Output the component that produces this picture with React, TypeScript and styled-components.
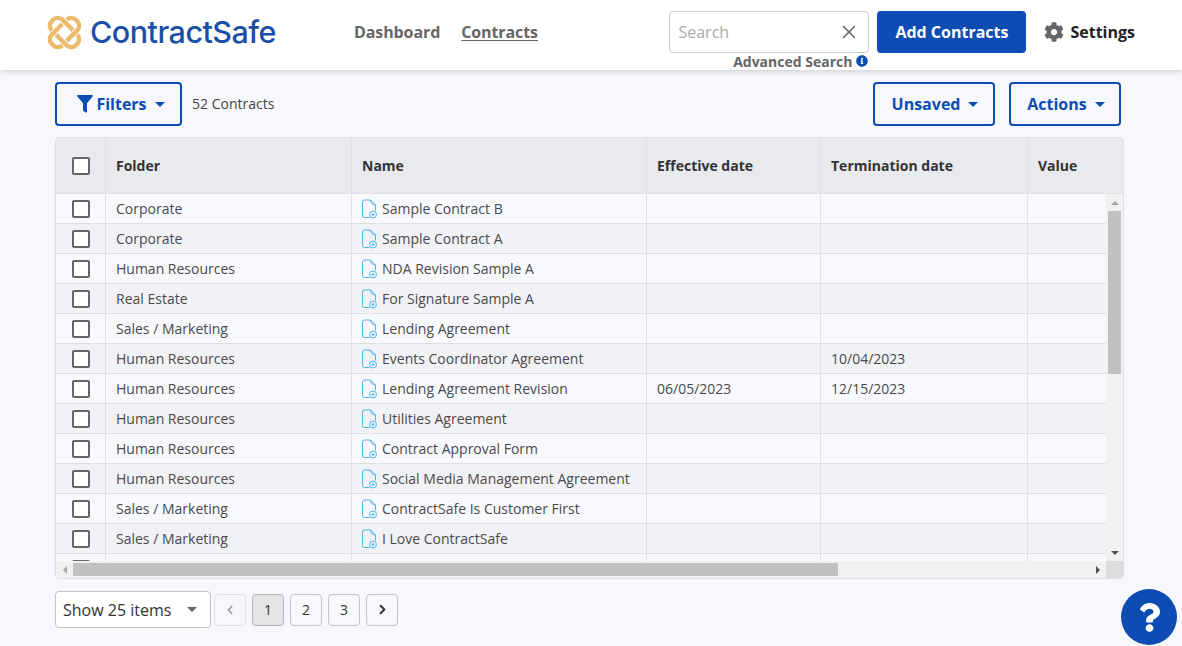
import React from "react";
import styled, { createGlobalStyle } from "styled-components";
import { FaCog, FaInfoCircle, FaQuestion } from "react-icons/fa";
import { X, ChevronLeft, ChevronRight } from "lucide-react";

const Global = createGlobalStyle`
  html, body { margin: 0; padding: 0; height: 100%; background: #f7f8fc; overflow: hidden; }
  body { font-family: "Open Sans", "Liberation Sans", sans-serif; color: #444; }
  * { box-sizing: border-box; }
`;

const Page = styled.div`
  position: relative;
  width: 1182px;
  height: 646px;
  overflow: hidden;
`;

const Header = styled.header`
  height: 70px;
  background: #fff;
  box-shadow: 0 1px 6px rgba(0, 0, 0, 0.2);
  display: flex;
  align-items: flex-start;
  padding: 11px 47px 0 47px;
  position: relative;
  z-index: 2;
`;

const Brand = styled.div`
  display: flex;
  align-items: center;
  height: 42px;
  gap: 8px;
  width: 307px;
`;

const BrandName = styled.span`
  font-family: "Inter", "Open Sans", sans-serif;
  font-weight: 500;
  font-size: 30.5px;
  letter-spacing: -0.52px;
  color: #1a4fa8;
  padding-bottom: 2px;
`;

const Nav = styled.nav`
  display: flex;
  align-items: center;
  height: 42px;
  gap: 21px;
`;

const NavLink = styled.a<{ $active?: boolean }>`
  font-size: 16px;
  font-weight: 700;
  color: #666;
  letter-spacing: -0.1px;
  text-decoration: ${(p) => (p.$active ? "underline" : "none")};
  text-underline-offset: 2px;
`;

const Right = styled.div`
  margin-left: auto;
  display: flex;
  align-items: flex-start;
  gap: 8px;
`;

const SearchColumn = styled.div`
  display: flex;
  flex-direction: column;
  align-items: flex-end;
  width: 200px;
`;

const SearchBox = styled.div`
  width: 200px;
  height: 42px;
  border: 1px solid #ccc;
  border-radius: 4px;
  background: #fff;
  display: flex;
  align-items: center;
  justify-content: space-between;
  padding: 0 8px 0 8px;
  color: #666;
`;

const Placeholder = styled.span`
  font-size: 16px;
  color: #aaa;
`;

const AdvancedSearch = styled.div`
  display: flex;
  align-items: center;
  gap: 4px;
  height: 16px;
  font-size: 14px;
  font-weight: 700;
  color: #666;
  margin-right: 1px;
  white-space: nowrap;
  svg { color: #0d4db3; }
`;

const PrimaryButton = styled.button`
  width: 149px;
  height: 42px;
  border: 0;
  border-radius: 4px;
  background: #0d4db3;
  color: #fff;
  font: 700 16px "Open Sans", sans-serif;
`;

const SettingsLink = styled.div`
  display: flex;
  align-items: center;
  height: 42px;
  gap: 6px;
  margin-left: 10px;
  font-size: 16px;
  font-weight: 700;
  color: #222;
  svg { color: #666; }
`;

const Main = styled.main`
  padding: 12px 58px 0 55px;
`;

const Toolbar = styled.div`
  display: flex;
  align-items: center;
  height: 44px;
  padding-right: 3px;
  gap: 14px;
`;

const OutlineButton = styled.button<{ $width: number; $inset: number }>`
  width: ${(p) => p.$width}px;
  height: 44px;
  border: 2px solid #0d4db3;
  border-radius: 4px;
  background: transparent;
  color: #0d4db3;
  font: 700 16px "Open Sans", sans-serif;
  display: flex;
  align-items: center;
  justify-content: center;
  gap: 4px;
  padding: 0 0 0 ${(p) => p.$inset}px;
`;

const Caret = styled.span`
  width: 0;
  height: 0;
  margin-left: 4px;
  border-left: 5px solid transparent;
  border-right: 5px solid transparent;
  border-top: 5px solid currentColor;
`;

const Count = styled.span`
  font-size: 14px;
  color: #444;
  margin-left: -4px;
  padding-bottom: 2px;
  flex: 1;
`;

const TableFrame = styled.div`
  position: relative;
  margin-top: 11px;
  width: 1069px;
  height: 442px;
  border: 1px solid #dfe0e3;
  border-radius: 4px;
  overflow: hidden;
`;

const Columns = "50px 246px 295px 174px 207px 300px";

const HeadRow = styled.div`
  display: grid;
  grid-template-columns: ${Columns};
  height: 56px;
  background: #e9eaee;
  border-bottom: 1px solid #dfe0e3;
`;

const HeadCell = styled.div`
  display: flex;
  align-items: center;
  padding-left: 10px;
  font-size: 14px;
  font-weight: 700;
  color: #333;
  border-right: 1px solid #dfe0e3;
  &:last-child { border-right: 0; }
`;

const CheckCell = styled.div`
  display: flex;
  align-items: center;
  justify-content: center;
  border-right: 1px solid #dfe0e3;
`;

const Check = styled.span`
  width: 18px;
  height: 18px;
  border: 2px solid #666;
  border-radius: 2px;
  background: #fff;
  margin-left: 1px;
`;

const Row = styled.div<{ $even: boolean }>`
  display: grid;
  grid-template-columns: ${Columns};
  height: 30px;
  background: ${(p) => (p.$even ? "#f1f2f6" : "#f8f9fd")};
  border-bottom: 1px solid #dfe0e3;
`;

const Cell = styled.div`
  display: flex;
  align-items: center;
  padding-left: 10px;
  font-size: 14px;
  color: #4a4a4a;
  white-space: nowrap;
  border-right: 1px solid #dfe0e3;
  &:last-child { border-right: 0; }
`;

const NameCell = styled(Cell)`
  gap: 5px;
`;

const VScroll = styled.div`
  position: absolute;
  top: 56px;
  right: 0;
  bottom: 17px;
  width: 17px;
  background: #f1f1f1;
  display: flex;
  flex-direction: column;
  align-items: center;
`;

const HScroll = styled.div`
  position: absolute;
  left: 0;
  right: 17px;
  bottom: 0;
  height: 17px;
  background: #f1f1f1;
  display: flex;
  align-items: center;
`;

const Corner = styled.div`
  position: absolute;
  right: 0;
  bottom: 0;
  width: 17px;
  height: 17px;
  background: #dcdcdc;
`;

const ArrowSlot = styled.div`
  flex: none;
  width: 17px;
  height: 17px;
  display: flex;
  align-items: center;
  justify-content: center;
`;

const Spacer = styled.div`
  flex: 1;
`;

const VThumb = styled.div`
  width: 13px;
  height: 163px;
  background: #c1c1c1;
  flex: none;
`;

const HThumb = styled.div`
  width: 765px;
  height: 13px;
  background: #c1c1c1;
  flex: none;
`;

const Arrow = styled.span<{ $dir: "up" | "down" | "left" | "right"; $muted?: boolean }>`
  width: 0;
  height: 0;
  border-style: solid;
  border-color: transparent;
  ${(p) => {
    const c = p.$muted ? "#a3a3a3" : "#505050";
    switch (p.$dir) {
      case "up":
        return `border-width: 0 4px 4px 4px; border-bottom-color: ${c};`;
      case "down":
        return `border-width: 4px 4px 0 4px; border-top-color: ${c};`;
      case "left":
        return `border-width: 4px 4px 4px 0; border-right-color: ${c};`;
      default:
        return `border-width: 4px 0 4px 4px; border-left-color: ${c};`;
    }
  }}
`;

const Footer = styled.div`
  display: flex;
  align-items: center;
  margin-top: 12px;
  height: 37px;
  gap: 6px;
`;

const ItemsSelect = styled.div`
  width: 156px;
  height: 37px;
  border: 1px solid #c4c4c4;
  border-radius: 4px;
  background: #fff;
  display: flex;
  align-items: center;
  justify-content: space-between;
  padding: 0 13px 0 7px;
  font-size: 16px;
  color: #333;
  margin-right: -3px;
  span:last-child { color: #666; }
`;

const PageButton = styled.div<{ $active?: boolean; $disabled?: boolean }>`
  width: 32px;
  height: 32px;
  border: 1px solid ${(p) => (p.$disabled ? "#e2e2e6" : p.$active ? "#b5b5b5" : "#c4c4c4")};
  border-radius: 4px;
  background: ${(p) => (p.$active ? "#e4e5e7" : "transparent")};
  color: ${(p) => (p.$disabled ? "#999" : "#333")};
  display: flex;
  align-items: center;
  justify-content: center;
  font-size: 14px;
`;

const HelpButton = styled.div`
  position: absolute;
  left: 1121px;
  top: 589px;
  width: 56px;
  height: 56px;
  border-radius: 50%;
  background: #0d4db3;
  color: #fff;
  display: flex;
  align-items: center;
  justify-content: center;
`;

const FilterGlyph = styled.svg`
  margin-right: -1px;
`;

const ringA = { x: 0.5, y: 10, width: 34, height: 15, rx: 6.5, transform: "rotate(45 17.5 17.5)" };
const ringB = { x: 0.5, y: 10, width: 34, height: 15, rx: 6.5, transform: "rotate(-45 17.5 17.5)" };

const Logo = () => (
  <svg width="35" height="35" viewBox="0 0 35 35" fill="none" stroke="#ecba6c" strokeWidth="4.4">
    <defs>
      <clipPath id="logo-sides">
        <rect x="0" y="0" width="12" height="35" />
        <rect x="23" y="0" width="12" height="35" />
      </clipPath>
    </defs>
    <rect {...ringB} />
    <rect {...ringA} stroke="#fff" strokeWidth="6.2" />
    <rect {...ringA} />
    <g clipPath="url(#logo-sides)">
      <rect {...ringB} stroke="#fff" strokeWidth="6.2" />
      <rect {...ringB} />
    </g>
  </svg>
);

const FilterIcon = () => (
  <FilterGlyph width="16" height="18" viewBox="0 0 16 18" fill="currentColor">
    <path d="M1 0 H15 Q16.4 .3 15.6 1.6 L10 8.2 V16.6 Q9.8 18 8.4 17.4 L6.6 16 Q6 15.5 6 14.8 V8.2 L.4 1.6 Q-.4 .3 1 0 Z" />
  </FilterGlyph>
);

const FileIcon = () => (
  <svg width="15" height="20" viewBox="0 0 15 20" fill="none" stroke="#4db6ef" strokeWidth="1">
    <path d="M7.5 18.5 H2.5 Q.5 18.5 .5 16.5 V3 Q.5 1 2.5 1 H8.5 L13.5 6 V11.5" strokeLinejoin="round" />
    <path d="M8.5 1 Q8.5 5.5 13.5 6" />
    <circle cx="11" cy="15.5" r="3.5" />
    <path d="M11 13.8 V17.2 M9.3 15.5 H12.7" />
  </svg>
);

type Data = [string, string, string, string];

const rows: Data[] = [
  ["Corporate", "Sample Contract B", "", ""],
  ["Corporate", "Sample Contract A", "", ""],
  ["Human Resources", "NDA Revision Sample A", "", ""],
  ["Real Estate", "For Signature Sample A", "", ""],
  ["Sales / Marketing", "Lending Agreement", "", ""],
  ["Human Resources", "Events Coordinator Agreement", "", "10/04/2023"],
  ["Human Resources", "Lending Agreement Revision", "06/05/2023", "12/15/2023"],
  ["Human Resources", "Utilities Agreement", "", ""],
  ["Human Resources", "Contract Approval Form", "", ""],
  ["Human Resources", "Social Media Management Agreement", "", ""],
  ["Sales / Marketing", "ContractSafe Is Customer First", "", ""],
  ["Sales / Marketing", "I Love ContractSafe", "", ""],
  ["", "", "", ""],
];

export default function App() {
  return (
    <Page>
      <Global />
      <Header>
        <Brand>
          <Logo />
          <BrandName>ContractSafe</BrandName>
        </Brand>
        <Nav>
          <NavLink>Dashboard</NavLink>
          <NavLink $active>Contracts</NavLink>
        </Nav>
        <Right>
          <SearchColumn>
            <SearchBox>
              <Placeholder>Search</Placeholder>
              <X size={22} strokeWidth={1.6} />
            </SearchBox>
            <AdvancedSearch>
              Advanced Search <FaInfoCircle size={12} />
            </AdvancedSearch>
          </SearchColumn>
          <PrimaryButton>Add Contracts</PrimaryButton>
          <SettingsLink>
            <FaCog size={20} />
            Settings
          </SettingsLink>
        </Right>
      </Header>
      <Main>
        <Toolbar>
          <OutlineButton $width={127} $inset={5}>
            <FilterIcon />
            Filters
            <Caret />
          </OutlineButton>
          <Count>52 Contracts</Count>
          <OutlineButton $width={122} $inset={2}>
            Unsaved
            <Caret />
          </OutlineButton>
          <OutlineButton $width={112} $inset={2}>
            Actions
            <Caret />
          </OutlineButton>
        </Toolbar>
        <TableFrame>
          <HeadRow>
            <CheckCell>
              <Check />
            </CheckCell>
            <HeadCell>Folder</HeadCell>
            <HeadCell>Name</HeadCell>
            <HeadCell>Effective date</HeadCell>
            <HeadCell>Termination date</HeadCell>
            <HeadCell>Value</HeadCell>
          </HeadRow>
          {rows.map((r, i) => (
            <Row key={i} $even={i % 2 === 1}>
              <CheckCell>
                <Check />
              </CheckCell>
              <Cell>{r[0]}</Cell>
              <NameCell>
                {r[1] && <FileIcon />}
                {r[1]}
              </NameCell>
              <Cell>{r[2]}</Cell>
              <Cell>{r[3]}</Cell>
              <Cell />
            </Row>
          ))}
          <VScroll>
            <ArrowSlot>
              <Arrow $dir="up" $muted />
            </ArrowSlot>
            <VThumb />
            <Spacer />
            <ArrowSlot>
              <Arrow $dir="down" />
            </ArrowSlot>
          </VScroll>
          <HScroll>
            <ArrowSlot>
              <Arrow $dir="left" $muted />
            </ArrowSlot>
            <HThumb />
            <Spacer />
            <ArrowSlot>
              <Arrow $dir="right" />
            </ArrowSlot>
          </HScroll>
          <Corner />
        </TableFrame>
        <Footer>
          <ItemsSelect>
            <span>Show 25 items</span>
            <Caret />
          </ItemsSelect>
          <PageButton $disabled>
            <ChevronLeft size={14} strokeWidth={2.5} />
          </PageButton>
          <PageButton $active>1</PageButton>
          <PageButton>2</PageButton>
          <PageButton>3</PageButton>
          <PageButton>
            <ChevronRight size={15} strokeWidth={3} />
          </PageButton>
        </Footer>
      </Main>
      <HelpButton>
        <FaQuestion size={29} />
      </HelpButton>
    </Page>
  );
}
